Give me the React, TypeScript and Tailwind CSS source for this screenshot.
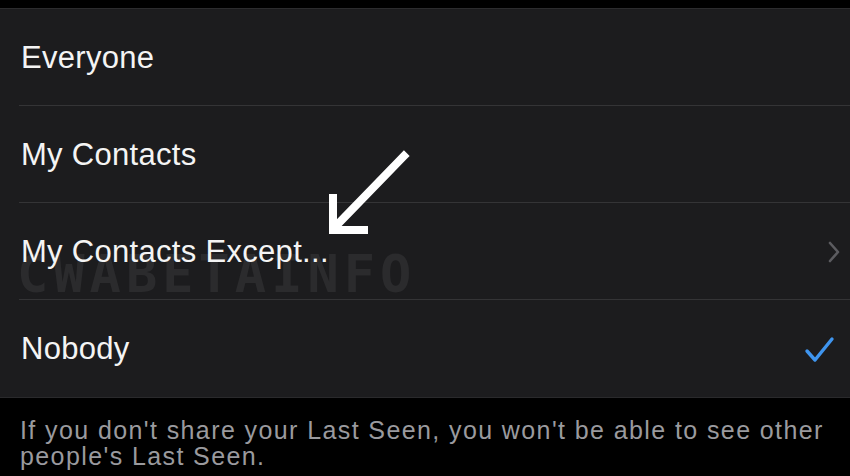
import React from "react";

type Row = { label: string; accessory?: "chevron" | "check"; watermark?: boolean };

const rows: Row[] = [
  { label: "Everyone" },
  { label: "My Contacts" },
  { label: "My Contacts Except...", accessory: "chevron", watermark: true },
  { label: "Nobody", accessory: "check" },
];

function Chevron() {
  return (
    <svg className="-mr-[4px]" width="12" height="22" viewBox="0 0 12 22" fill="none">
      <path d="M2 2 L10 11 L2 20" stroke="#5c5c60" strokeWidth="2.6" strokeLinecap="round" strokeLinejoin="round" />
    </svg>
  );
}

function Check() {
  return (
    <svg className="mt-[2px]" width="32" height="30" viewBox="0 0 32 30" fill="none">
      <path d="M3 16 L11 25 L28 4" stroke="#3f95ef" strokeWidth="3.4" strokeLinecap="round" strokeLinejoin="round" />
    </svg>
  );
}

export default function App() {
  return (
    <div
      className="relative w-[850px] h-[476px] overflow-hidden bg-black"
      style={{ fontFamily: '"Liberation Sans", Arial, sans-serif' }}
    >
      <div className="h-[8px] bg-black" />
      <div className="bg-[#1c1c1e] border-t border-[#2c2c2e] border-b border-b-[#2a2a2c]">
        {rows.map((r, i) => (
          <div key={r.label} className="relative h-[97px] flex items-center pl-[21px] pr-[14px]">
            {r.watermark && (
              <span
                className="absolute left-[17px] top-[45px] text-[52px] font-bold leading-none tracking-[5px] text-[#2b2b2d] select-none"
                style={{ fontFamily: '"DejaVu Sans Mono", monospace' }}
              >
                CWABETAINFO
              </span>
            )}
            <span className="relative text-[31px] text-[#f4f4f4] leading-none tracking-[0.3px]">{r.label}</span>
            <div className="ml-auto flex items-center">
              {r.accessory === "chevron" && <Chevron />}
              {r.accessory === "check" && <Check />}
            </div>
            {i < rows.length - 1 && (
              <div className="absolute left-[19px] right-0 bottom-0 h-px bg-[#343436]" />
            )}
          </div>
        ))}
      </div>
      <p className="pl-[20px] pr-[12px] pt-[19px] text-[25px] leading-[26px] text-[#9a9a9e] tracking-[1.4px]">
        If you don't share your Last Seen, you won't be able to see other people's Last Seen.
      </p>
      {/* pointer arrow drawn over the list */}
      <svg className="absolute left-[320px] top-[148px]" width="100" height="94" viewBox="0 0 100 94" fill="none">
        <path d="M84 8 L16 78" stroke="#ffffff" strokeWidth="8" strokeLinecap="square" />
        <path d="M13 50 L13 82 L44 82" stroke="#ffffff" strokeWidth="8" strokeLinecap="square" strokeLinejoin="miter" />
      </svg>
    </div>
  );
}
